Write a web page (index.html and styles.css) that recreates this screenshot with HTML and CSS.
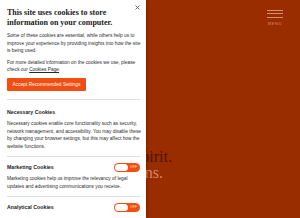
FILE: index.html
```html
<!DOCTYPE html>
<html lang="en">
<head>
<meta charset="utf-8">
<title>Cookies</title>
<link rel="stylesheet" href="styles.css">
</head>
<body>
<div class="page">
  <header class="site-header">
    <button class="menu-btn" type="button">
      <span class="menu-lines"><i></i><i></i><i></i></span>
      <span class="menu-label">MENU</span>
    </button>
  </header>
  <section class="hero">
    <p class="hero-line hero-dark">Legal minds with a human spirit.</p>
    <p class="hero-line hero-light">Practical solutions.</p>
  </section>
</div>

<aside class="cookie-panel">
  <div class="panel-head">
    <h1 class="panel-title">This site uses cookies to store information on your computer.</h1>
    <button class="close-btn" type="button" aria-label="Close">
      <svg width="5" height="5" viewBox="0 0 5 5"><path d="M0.5 0.5L4.5 4.5M4.5 0.5L0.5 4.5" stroke="#444" stroke-width="0.8" fill="none"/></svg>
    </button>
  </div>
  <p class="text intro">Some of these cookies are essential, while others help us to improve your experience by providing insights into how the site is being used.</p>
  <p class="text intro-2">For more detailed information on the cookies we use, please check our <a href="#" class="link">Cookies Page</a>.</p>
  <button class="accept-btn" type="button">Accept Recommended Settings</button>

  <div class="section section--lead">
    <div class="section-row">
      <h2 class="section-title">Necessary Cookies</h2>
    </div>
    <p class="text section-text">Necessary cookies enable core functionality such as security, network management, and accessibility. You may disable these by changing your browser settings, but this may affect how the website functions.</p>
  </div>

  <div class="section">
    <div class="section-row">
      <h2 class="section-title">Marketing Cookies</h2>
      <span class="toggle"><span class="knob"></span><span class="toggle-text">OFF</span></span>
    </div>
    <p class="text section-text">Marketing cookies help us improve the relevancy of legal updates and advertising communications you receive.</p>
  </div>

  <div class="section">
    <div class="section-row">
      <h2 class="section-title">Analytical Cookies</h2>
      <span class="toggle"><span class="knob"></span><span class="toggle-text">OFF</span></span>
    </div>
    <p class="text section-text section-text--low">Analytical cookies help us improve our website by collecting and reporting information on its usage.</p>
  </div>
</aside>
</body>
</html>
```

FILE: styles.css
```css
* { box-sizing: border-box; }
html, body { margin: 0; padding: 0; }
body {
  width: 300px;
  height: 218px;
  overflow: hidden;
  background: #9a2d00;
  font-family: "Liberation Sans", Arial, sans-serif;
  position: relative;
}
.page {
  display: flex;
  flex-direction: column;
}
.site-header {
  display: flex;
  justify-content: flex-end;
  padding: 9.5px 17px 0 0;
}
.menu-btn {
  background: none;
  border: 0;
  padding: 0;
  display: flex;
  flex-direction: column;
  align-items: center;
  cursor: pointer;
}
.menu-lines {
  display: flex;
  flex-direction: column;
  gap: 2.5px;
}
.menu-lines i {
  display: block;
  width: 16px;
  height: 1px;
  background: #d98c72;
}
.menu-label {
  margin-top: 3px;
  font-size: 4px;
  line-height: 5px;
  letter-spacing: 0.7px;
  color: #d98c72;
  font-family: "Liberation Sans", Arial, sans-serif;
}
.hero {
  margin-top: 123.5px;
  width: 172px;
  display: flex;
  flex-direction: column;
  align-items: flex-end;
  font-family: "Liberation Serif", "Times New Roman", serif;
  font-size: 16px;
  line-height: 16px;
}
.hero-line {
  margin: 0;
  white-space: nowrap;
  flex: none;
}
.hero-dark { color: #4e1400; }
.hero-light { color: #d8866a; margin-right: 9px; }

.cookie-panel {
  position: absolute;
  left: 0;
  top: 0;
  width: 146px;
  height: 218px;
  overflow: hidden;
  background: #fff;
  padding: 8px 4px 0 7px;
  box-shadow: 0 0 4px rgba(0,0,0,0.35);
  color: #222;
}
.panel-head {
  display: flex;
  align-items: flex-start;
  justify-content: space-between;
  padding-right: 2px;
}
.panel-title {
  margin: 0;
  width: 112px;
  font-family: "Liberation Serif", "Times New Roman", serif;
  font-weight: bold;
  font-size: 8px;
  line-height: 10px;
  color: #1a1a1a;
}
.close-btn {
  background: none;
  border: 0;
  padding: 0;
  margin: -3px 0 0 0;
  width: 5px;
  height: 5px;
  display: flex;
}
.text {
  margin: 0;
  font-size: 4.8px;
  line-height: 7.5px;
  color: #2a2a2a;
}
.intro { margin-top: 4px; }
.intro-2 { margin-top: 4px; }
.link { color: #2a2a2a; text-decoration: underline; }
.accept-btn {
  display: block;
  margin-top: 4.5px;
  height: 13px;
  width: 79px;
  padding: 0;
  border: 0;
  border-radius: 1px;
  background: #f24e12;
  color: #fff;
  font-family: "Liberation Sans", Arial, sans-serif;
  font-size: 4.85px;
  line-height: 13px;
  text-align: center;
}
.section {
  border-top: 1px solid #dedede;
  padding: 6px 0 6px;
  margin-right: 2px;
}
.section--lead {
  margin-top: 8px;
  padding-top: 8px;
}
.section-text {
  margin-top: 3px;
  margin-right: -2px;
}
.section-row {
  display: flex;
  align-items: center;
  justify-content: space-between;
  min-height: 9px;
}
.section-title {
  margin: 0;
  font-size: 5.25px;
  line-height: 9px;
  font-weight: bold;
  color: #1a1a1a;
}
.section-text--low { margin-top: 10px; }
.toggle {
  width: 26px;
  height: 9px;
  border-radius: 5px;
  background: #f24e12;
  display: flex;
  align-items: center;
  padding: 1px;
  flex: none;
}
.knob {
  width: 13px;
  height: 7px;
  border-radius: 4px;
  background: #fff;
}
.toggle-text {
  margin-left: 2px;
  font-size: 3.3px;
  line-height: 7px;
  color: #fde0d4;
  letter-spacing: 0.2px;
}
```
